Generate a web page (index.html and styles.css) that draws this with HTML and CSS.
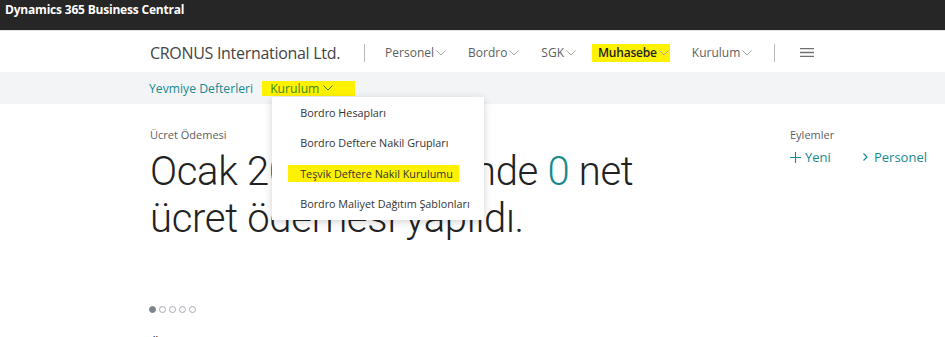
FILE: index.html
```html
<!DOCTYPE html>
<html lang="tr">
<head>
    <meta charset="UTF-8">
    <title>Dynamics 365 Business Central</title>
    <link rel="stylesheet" href="styles.css">
</head>
<body>

    <header class="appbar">Dynamics 365 Business Central</header>

    <nav class="topnav">
        <div class="company">CRONUS International Ltd.</div>
        <span class="divider"></span>
        <a class="nav-item">Personel<svg class="chev" viewBox="0 0 10 6"><path d="M0.5 0.5 L5 5 L9.5 0.5"/></svg></a>
        <a class="nav-item">Bordro<svg class="chev" viewBox="0 0 10 6"><path d="M0.5 0.5 L5 5 L9.5 0.5"/></svg></a>
        <a class="nav-item">SGK<svg class="chev" viewBox="0 0 10 6"><path d="M0.5 0.5 L5 5 L9.5 0.5"/></svg></a>
        <a class="nav-item marked">Muhasebe<svg class="chev" viewBox="0 0 10 6"><path d="M0.5 0.5 L5 5 L9.5 0.5"/></svg></a>
        <a class="nav-item">Kurulum<svg class="chev" viewBox="0 0 10 6"><path d="M0.5 0.5 L5 5 L9.5 0.5"/></svg></a>
        <span class="divider end"></span>
        <svg class="hamburger" viewBox="0 0 14 9"><path d="M0 0.5 H14 M0 4.5 H14 M0 8.5 H14"/></svg>
    </nav>

    <div class="subnav">
        <a class="sub-item">Yevmiye Defterleri</a>
        <div class="sub-menu">
            <a class="sub-item marked">Kurulum<svg class="chev" viewBox="0 0 10 6"><path d="M0.5 0.5 L5 5 L9.5 0.5"/></svg></a>
            <ul class="dropdown">
                <li>Bordro Hesapları</li>
                <li>Bordro Deftere Nakil Grupları</li>
                <li><span class="marked">Teşvik Deftere Nakil Kurulumu</span></li>
                <li>Bordro Maliyet Dağıtım Şablonları</li>
            </ul>
        </div>
    </div>

    <main class="content">
        <section class="headline">
            <div class="caption">Ücret Ödemesi</div>
            <h1>Ocak 2020 döneminde <span class="num">0</span> net ücret ödemesi yapıldı.</h1>
        </section>
        <aside class="actions">
            <div class="caption">Eylemler</div>
            <div class="action-row">
                <a class="action"><svg class="plus" viewBox="0 0 12 12"><path d="M6 0 V12 M0 6 H12"/></svg>Yeni</a>
                <a class="action"><svg class="arrow" viewBox="0 0 5 8"><path d="M0.5 0.5 L4 4 L0.5 7.5"/></svg>Personel</a>
            </div>
        </aside>
    </main>

    <div class="dots">
        <span class="dot active"></span>
        <span class="dot"></span>
        <span class="dot"></span>
        <span class="dot"></span>
        <span class="dot"></span>
    </div>

    <div class="next-title">Ödemeler</div>

</body>
</html>
```

FILE: styles.css
```css
body {
    margin: 0;
    font-family: "Open Sans", "Noto Sans", sans-serif;
    color: #505050;
    background: #fff;
    overflow: hidden;
}
a {
    cursor: pointer;
}
.appbar {
    height: 30px;
    background: #262626;
    color: #fff;
    font-weight: 700;
    font-size: 12px;
    padding: 1px 0 0 5px;
    box-sizing: border-box;
    line-height: 18px;
    letter-spacing: -0.2px;
}
.topnav {
    display: flex;
    align-items: center;
    height: 42px;
    border-top: 1px solid #e4e4e4;
    padding-left: 150px;
    box-sizing: border-box;
}
.company {
    font-size: 16px;
    color: #444;
    letter-spacing: -0.3px;
    margin-top: 2px;
}
.divider {
    width: 1px;
    height: 18px;
    background: #b8b8b8;
    margin: 2px 20px 0 24px;
}
.divider.end {
    margin: 2px 25px 0 0;
}
.nav-item {
    display: flex;
    align-items: center;
    font-size: 12px;
    color: #606060;
    margin-right: 22px;
    margin-top: 2px;
    line-height: 18px;
}
.chev {
    width: 10px;
    height: 6px;
    margin-left: 2px;
    fill: none;
    stroke: #a8a8a8;
    stroke-width: 1;
}
.nav-item.marked {
    background: #fff200;
    color: #222;
    font-weight: 600;
    padding: 0 1px 0 6px;
    margin-left: -6px;
    letter-spacing: -0.2px;
}
.hamburger {
    width: 14px;
    height: 9px;
    margin-top: 2px;
    fill: none;
    stroke: #707070;
    stroke-width: 1.4;
}
.subnav {
    display: flex;
    align-items: center;
    height: 32px;
    background: #f3f4f6;
    padding-left: 149px;
    box-sizing: border-box;
}
.sub-item {
    display: flex;
    align-items: center;
    font-size: 12.2px;
    color: #168a8f;
    line-height: 15px;
}
.sub-menu {
    position: relative;
    margin-left: 9px;
}
.sub-item.marked {
    background: #fff200;
    color: #3d8a1d;
    padding: 0 22px 0 8px;
}
.sub-item.marked .chev {
    stroke: #3d8a1d;
    margin-left: 4px;
}
.dropdown {
    position: absolute;
    left: 10px;
    top: 16px;
    width: 212px;
    margin: 0;
    padding: 1px 0 0;
    list-style: none;
    background: #fff;
    box-shadow: 0 2px 8px rgba(0, 0, 0, 0.18);
    z-index: 2;
}
.dropdown li {
    font-size: 10.8px;
    color: #333;
    padding: 0 0 0 28px;
    height: 30.6px;
    line-height: 30px;
    white-space: nowrap;
}
.dropdown .marked {
    display: inline-block;
    line-height: 17px;
    background: #fff200;
    margin-left: -12px;
    padding: 0 6px 0 12px;
}
.content {
    display: flex;
    padding: 24px 18px 0 150px;
}
.headline {
    flex: 1;
}
.caption {
    font-size: 11px;
    color: #606060;
    line-height: 14px;
}
h1 {
    margin: 6px 0 0;
    width: 500px;
    font-family: Roboto, "Open Sans", sans-serif;
    font-size: 40px;
    font-weight: 300;
    line-height: 47px;
    color: #222;
    letter-spacing: -0.3px;
}
.num {
    color: #168a8f;
}
.actions {
    width: 137px;
}
.action-row {
    display: flex;
    justify-content: space-between;
    margin-top: 6px;
}
.action {
    display: flex;
    align-items: center;
    font-size: 13px;
    color: #168a8f;
}
.plus {
    width: 11px;
    height: 11px;
    margin-right: 4px;
    fill: none;
    stroke: #168a8f;
    stroke-width: 1.2;
}
.arrow {
    width: 5px;
    height: 8px;
    margin-right: 6px;
    fill: none;
    stroke: #168a8f;
    stroke-width: 1.2;
}
.dots {
    display: flex;
    gap: 3px;
    padding: 64px 0 0 149px;
}
.dot {
    width: 5px;
    height: 5px;
    border-radius: 50%;
    border: 1px solid #a8acb4;
}
.dot.active {
    background: #7d838d;
    border-color: #7d838d;
}
.next-title {
    padding: 21px 0 0 150px;
    font-size: 14px;
    color: #333;
}
```
